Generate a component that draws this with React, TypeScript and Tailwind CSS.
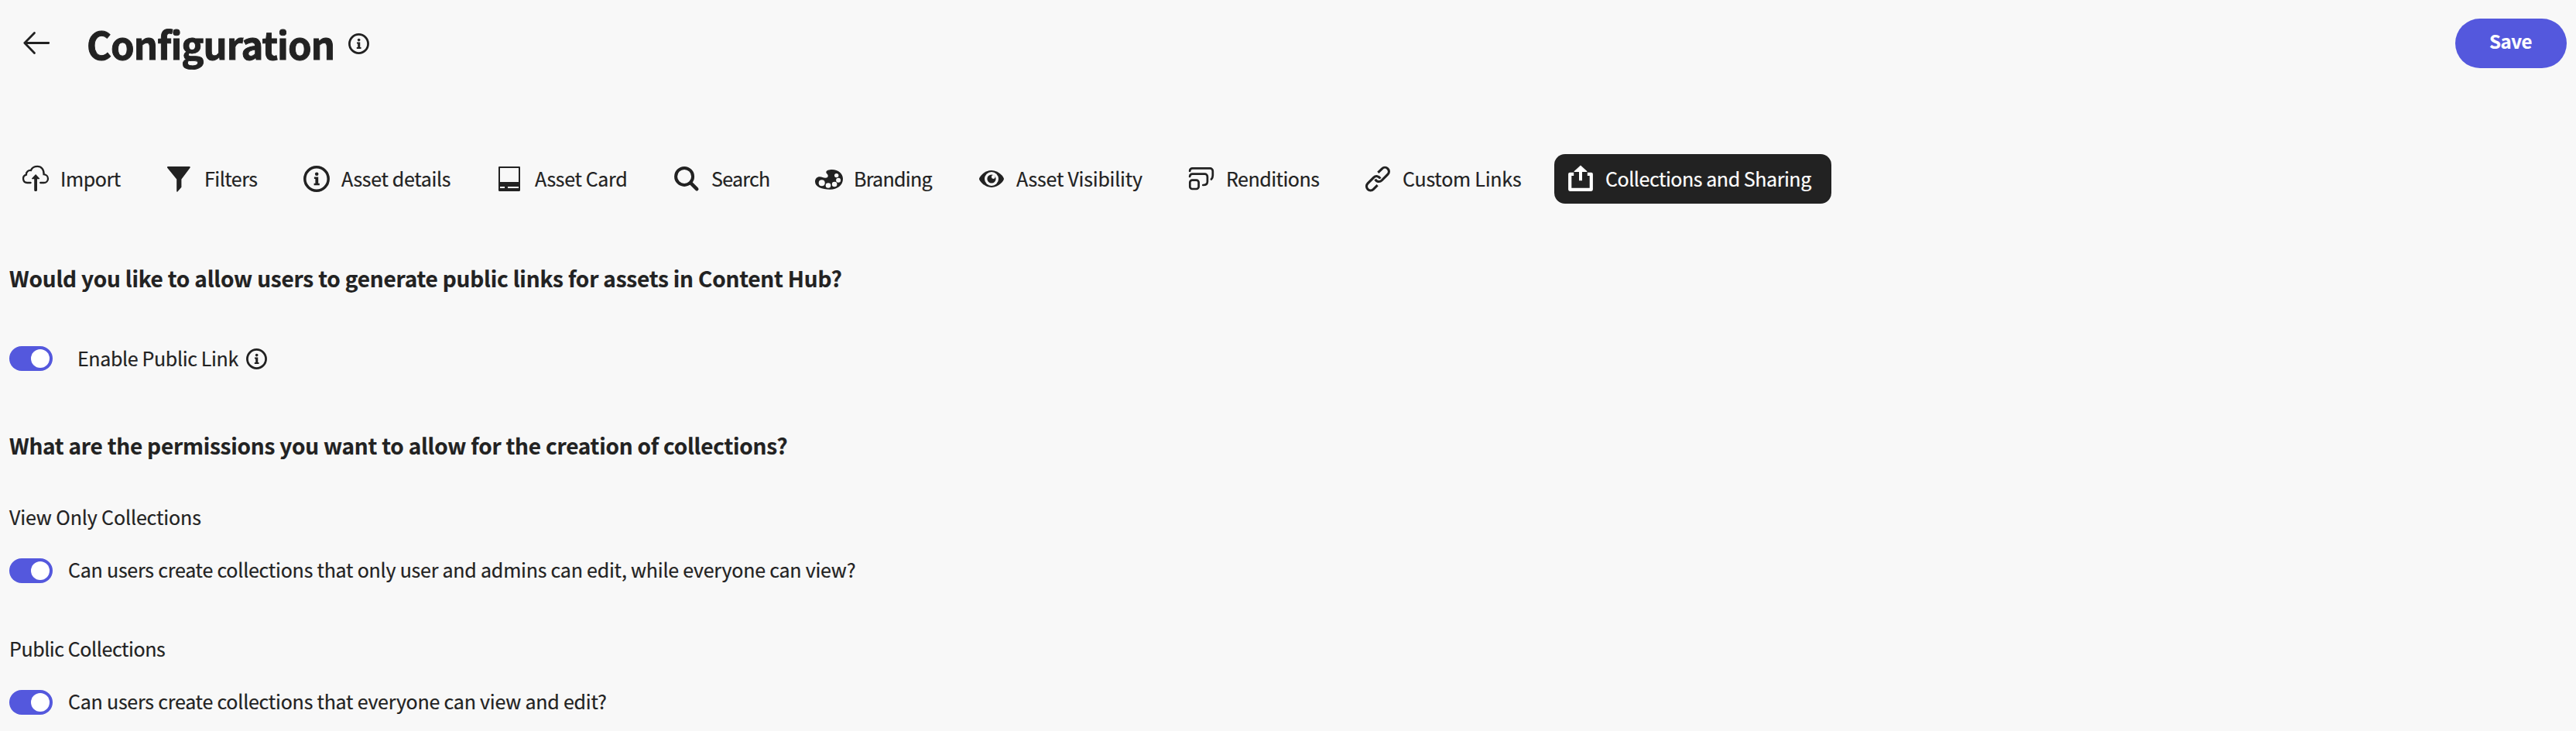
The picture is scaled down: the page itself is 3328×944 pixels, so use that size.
import type { ReactNode } from "react";
import clsx from "clsx";

function InfoIcon({ className }: { className: string }) {
  return (
    <svg viewBox="0 0 34 34" className={clsx("shrink-0", className)} fill="none" aria-hidden="true">
      <circle cx="17" cy="17" r="15.2" stroke="currentColor" strokeWidth="3.5" />
      <circle cx="17.2" cy="10.8" r="2.3" fill="currentColor" />
      <path d="M13.900 14.500h5.300v8.300h1.600V25.200H13.600v-2.400h1.800v-5.900H13.900z" fill="currentColor" />
    </svg>
  );
}

function Glyph({ children }: { children: ReactNode }) {
  return (
    <svg viewBox="0 0 36 36" className="size-9 shrink-0" fill="none" stroke="currentColor" aria-hidden="true">
      {children}
    </svg>
  );
}

const importIcon = (
  <Glyph>
    <path
      d="M11.6 23H7.2a5.3 5.3 0 0 1-1.3-10.4C5.6 8.9 8.5 6.7 11.9 7c1.400-3.500 4.900-5.200 8.500-5.200 5 0 8.600 4.200 8.200 10.300 3.300.200 5.400 2.800 5.400 5.600 0 3-2.300 5.300-5.400 5.300h-4.400"
      strokeWidth="2.300"
      strokeLinecap="round"
    />
    <path d="M18.100 12l4.900 5.200c.4.500.1 1-.5 1h-2.500v14.300c0 2-3.800 2-3.800 0V18.200h-2.500c-.6 0-.9-.5-.5-1z" fill="currentColor" stroke="none" />
  </Glyph>
);

const filterIcon = (
  <Glyph>
    <path
      d="M4 2h27.700c1 0 1.400 1 .8 1.800L21.400 18.600v10.200l-5 5.800c-.5.500-1.200.2-1.200-.5V18.600L3.200 3.800C2.600 3 3 2 4 2z"
      fill="currentColor"
      stroke="none"
    />
  </Glyph>
);

const cardIcon = (
  <Glyph>
    <path
      d="M5.200 2h25.600c.7 0 1.200.5 1.200 1.200v29.600c0 .7-.5 1.200-1.200 1.200H5.200c-.7 0-1.200-.5-1.200-1.200V3.200C4 2.500 4.500 2 5.200 2zM6 4v18h24V4zM6 28v2h6v-2zM16 28v2h14v-2z"
      fill="currentColor"
      fillRule="evenodd"
      stroke="none"
    />
  </Glyph>
);

const searchIcon = (
  <Glyph>
    <circle cx="15.100" cy="14.900" r="11" strokeWidth="4" />
    <path d="M23.200 23.200l8 8" strokeWidth="4.600" strokeLinecap="round" />
  </Glyph>
);

const paletteIcon = (
  <Glyph>
    <path
      d="M14.300 9.500C14 7 18.500 6 22 6c8 0 14 5 14 12 0 8.500-7.500 13.700-16.500 13.700C9 31.700 0 28.500 0 21.500c0-3.800 2.500-6.300 6-6.300 3 0 4.500 1.600 7.300 1.600 2.400 0 3.600-1.300 3.400-3.100-.2-2-2.200-2.200-2.400-4.200z"
      fill="currentColor"
      stroke="none"
    />
    <g fill="#f8f8f8" stroke="none">
      <circle cx="8.700" cy="23.300" r="4" />
      <circle cx="17" cy="26.500" r="3.300" />
      <circle cx="25.100" cy="25" r="3.300" />
      <circle cx="30.100" cy="19.700" r="3" />
      <circle cx="27.700" cy="13.600" r="2.700" />
    </g>
  </Glyph>
);

const eyeIcon = (
  <Glyph>
    <path d="M2 18c0-2.200 6.500-11 16-11s16 8.800 16 11-6.500 11-16 11S2 20.200 2 18z" fill="currentColor" stroke="none" />
    <circle cx="18" cy="18" r="9" fill="#f8f8f8" stroke="none" />
    <circle cx="18" cy="18" r="5.600" fill="currentColor" stroke="none" />
    <circle cx="20.300" cy="15.500" r="2.400" fill="#f8f8f8" stroke="none" />
  </Glyph>
);

const renditionsIcon = (
  <Glyph>
    <g strokeWidth="2.700" strokeLinecap="round">
      <path d="M3.100 7.800c.2-2.200 1.400-3.400 3.500-3.400h22.700a3.500 3.500 0 0 1 3.500 3.500v5.600c0 2-.6 3.700-1.900 5" />
      <path d="M3.100 15c.2-2.200 1.400-3.300 3.500-3.300h15.800a3.500 3.500 0 0 1 3.500 3.500v6.300c0 2.800-1.900 4.500-5.600 4.500" />
      <rect x="3.300" y="19.600" width="11.300" height="11.400" rx="3" />
    </g>
  </Glyph>
);

const linkIcon = (
  <Glyph>
    <g strokeWidth="3.100">
      <path d="M18.300 9.900l5.200-5.100a5.100 5.100 0 0 1 7.400 7.400l-7.800 7.800a5.200 5.200 0 0 1-8.400-1.500" />
      <path d="M17.600 26.200l-5.200 5.100a5.100 5.100 0 0 1-7.400-7.400l7.800-7.800a5.200 5.200 0 0 1 8.400 1.500" />
    </g>
  </Glyph>
);

const shareIcon = (
  <Glyph>
    <path d="M9.200 11.800h-5v20h27.600v-20h-5" strokeWidth="4.200" strokeLinejoin="round" />
    <path d="M18 .4l8.200 7.600c.5.500.2 1-.4 1H20v11.300h-4V9h-5.800c-.6 0-.9-.5-.4-1z" fill="currentColor" stroke="none" />
  </Glyph>
);

const tabs: { label: string; icon: ReactNode; width: string; text: string; active?: boolean }[] = [
  { label: "Import", icon: importIcon, width: "w-[185px]", text: "tracking-[-0.4px]" },
  { label: "Filters", icon: filterIcon, width: "w-[178px]", text: "pl-px tracking-[-0.5px]" },
  { label: "Asset details", icon: <InfoIcon className="mx-px size-[34px]" />, width: "w-[249px]", text: "tracking-[-0.34px]" },
  { label: "Asset Card", icon: cardIcon, width: "w-[229px]", text: "pl-px tracking-[-0.35px]" },
  { label: "Search", icon: searchIcon, width: "w-[184px]", text: "tracking-[-0.72px]" },
  { label: "Branding", icon: paletteIcon, width: "w-[210px]", text: "tracking-[-0.7px]" },
  { label: "Asset Visibility", icon: eyeIcon, width: "w-[271px]", text: "tracking-[-0.23px]" },
  { label: "Renditions", icon: renditionsIcon, width: "w-[228px]", text: "tracking-[-0.51px]" },
  { label: "Custom Links", icon: linkIcon, width: "w-[262px]", text: "tracking-[-0.23px]" },
  { label: "Collections and Sharing", icon: shareIcon, width: "w-[358px]", text: "tracking-[-0.45px]", active: true },
];

function Toggle() {
  return (
    <button role="switch" aria-checked="true" className="flex h-8 w-14 shrink-0 items-center justify-end rounded-full bg-[#5458dd] pr-1">
      <span className="size-6 rounded-full bg-white" />
    </button>
  );
}

export default function App() {
  return (
    <div className="flex h-[944px] w-full flex-col overflow-hidden whitespace-nowrap bg-[#f8f8f8] font-['Noto_Sans_CJK_JP','Noto_Sans',sans-serif] text-[25px] text-[#222] [-webkit-text-stroke:0.2px_currentColor]">
      <header className="flex h-28 shrink-0 items-center pr-3 pl-7">
        <svg viewBox="0 0 38 32" className="h-8 w-[38px] shrink-0" fill="none" stroke="currentColor" strokeWidth="2.800" strokeLinecap="round" strokeLinejoin="round" aria-hidden="true">
          <path d="M16.500 2.500L3.800 15.500l12.700 13M3.800 15.500h31" />
        </svg>
        <h1 className="ml-[46px] w-[338px] pb-px text-[49px] leading-[56px] font-bold tracking-[-1.02px] [-webkit-text-stroke:0.9px_currentColor]">
          Configuration
        </h1>
        <InfoIcon className="size-[27px]" />
        <button className="ml-auto flex h-16 w-36 items-center justify-center rounded-full bg-[#5458dd] pr-px pb-[7px] text-[24px] font-bold tracking-[-0.43px] text-white">
          Save
        </button>
      </header>

      <nav className="mt-[87px] flex h-16 shrink-0 pl-3">
        {tabs.map((tab) => (
          <a
            key={tab.label}
            className={clsx("flex h-16 shrink-0 items-center gap-3.5 pl-4", tab.width, tab.active && "rounded-[14px] bg-[#222] text-white")}
          >
            {tab.icon}
            <span className={clsx("pb-0.5 leading-8", tab.text)}>{tab.label}</span>
          </a>
        ))}
      </nav>

      <main className="flex flex-col pl-3">
        <h2 className="mt-[76px] h-10 text-[28px] leading-10 font-bold tracking-[-0.2px]">
          Would you like to allow users to generate public links for assets in Content Hub?
        </h2>
        <div className="mt-[68px] flex h-8 items-center">
          <Toggle />
          <span className="ml-8 w-[218px] pb-0.5 leading-8 tracking-[-0.36px]">Enable Public Link</span>
          <InfoIcon className="size-[27px]" />
        </div>

        <h2 className="mt-[76px] h-10 text-[28px] leading-10 font-bold tracking-[-0.23px]">
          What are the permissions you want to allow for the creation of collections?
        </h2>

        <h3 className="mt-14 h-8 leading-8 tracking-[-0.13px]">View Only Collections</h3>
        <div className="mt-[38px] flex h-8 items-center gap-5">
          <Toggle />
          <span className="pb-1 leading-8 tracking-[-0.23px]">
            Can users create collections that only user and admins can edit, while everyone can view?
          </span>
        </div>

        <h3 className="mt-[68px] h-8 leading-8 tracking-[-0.42px]">Public Collections</h3>
        <div className="mt-[38px] flex h-8 items-center gap-5">
          <Toggle />
          <span className="pb-1 leading-8 tracking-[-0.23px]">Can users create collections that everyone can view and edit?</span>
        </div>
      </main>
    </div>
  );
}
